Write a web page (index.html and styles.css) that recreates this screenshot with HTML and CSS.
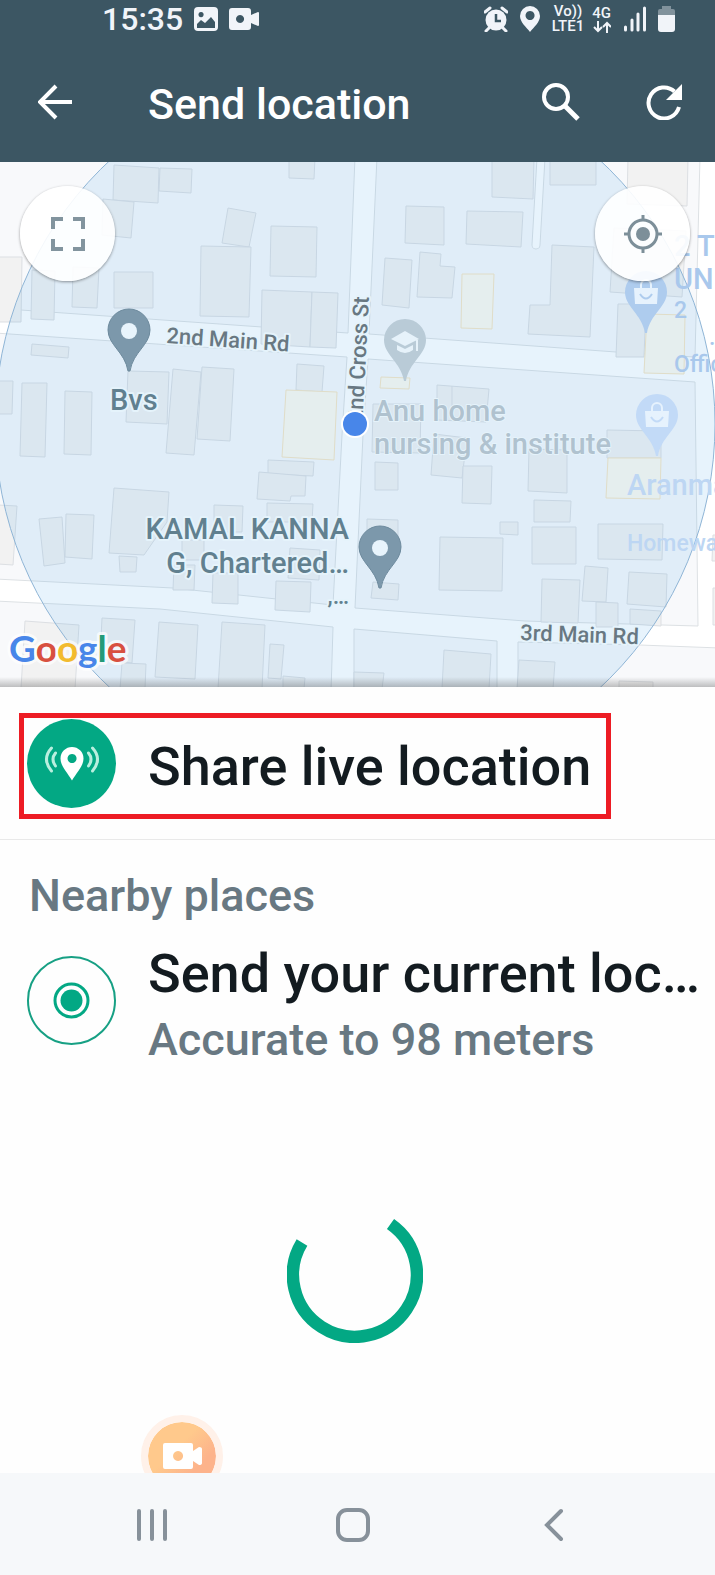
FILE: index.html
```
<!DOCTYPE html>
<html lang="en">
<head>
    <meta charset="UTF-8">
    <meta name="viewport" content="width=device-width, initial-scale=1.0">
    <title>Send location</title>
    <link rel="stylesheet" href="styles.css">
</head>
<body>

    <header>
        <div class="status-bar">
            <span class="clock">15:35</span>
            <svg class="status-image" width="24" height="24" viewBox="0 0 24 24">
                <path fill="#f1f4f9" fill-rule="evenodd" d="M4 0h16a4 4 0 0 1 4 4v16a4 4 0 0 1-4 4H4a4 4 0 0 1-4-4V4a4 4 0 0 1 4-4zM3 21h18v-6l-4-5-6 6-4-3-4 4zM7 5a2.600 2.600 0 1 0 .1 0z"/>
            </svg>
            <svg class="status-video" width="30" height="24" viewBox="0 0 30 24">
                <path fill="#f1f4f9" fill-rule="evenodd" d="M3 1h16a3 3 0 0 1 3 3v4l7-3q1 0 1 1v12q0 1-1 1l-7-3v4a3 3 0 0 1-3 3H3a3 3 0 0 1-3-3V4a3 3 0 0 1 3-3zM11 8a4 4 0 1 0 .1 0z"/>
            </svg>
            <div class="status-right">
                <svg width="24" height="26" viewBox="0 0 24 26">
                    <path d="M1 6l5-4M23 6l-5-4M5 22l-3 3M19 22l3 3" stroke="#f1f4f9" stroke-width="3" stroke-linecap="round"/>
                    <circle cx="12" cy="14" r="10.500" fill="#f1f4f9"/>
                    <path d="M12 8v7h5" fill="none" stroke="#3c5663" stroke-width="2.500"/>
                </svg>
                <svg width="20" height="26" viewBox="0 0 20 26">
                    <path fill="#f1f4f9" fill-rule="evenodd" d="M10 0a10 10 0 0 1 10 10c0 6-6 11-10 16C6 21 0 16 0 10A10 10 0 0 1 10 0zM10 5a4.500 4.500 0 1 0 .1 0z"/>
                </svg>
                <span class="tiny">Vo))<br>LTE1</span>
                <span class="tiny tiny-4g">4G
                    <svg width="18" height="12" viewBox="0 0 18 12">
                        <path d="M5 0v10M1 6l4 4 4-4M14 12V2M10 6l4-4 4 4" fill="none" stroke="#f1f4f9" stroke-width="2"/>
                    </svg>
                </span>
                <svg class="signal" width="22" height="26" viewBox="0 0 22 26">
                    <path d="M1.500 21v3M8 14v10M14 8v16M20.500 2v22" stroke="#f1f4f9" stroke-width="3" stroke-linecap="round"/>
                </svg>
                <svg class="battery" width="17" height="26" viewBox="0 0 17 26">
                    <path d="M4 0h9v3h2q2 0 2 2v5H0V5q0-2 2-2h2z" fill="#81929c"/>
                    <path d="M0 9h17v14q0 3-3 3H3q-3 0-3-3z" fill="#f1f4f9"/>
                </svg>
            </div>
        </div>
        <div class="toolbar">
            <button class="icon-btn back" aria-label="Back">
                <svg width="36" height="36" viewBox="0 0 36 36">
                    <path d="M34 18H3M18 2L2 18l16 16" fill="none" stroke="#fff" stroke-width="4"/>
                </svg>
            </button>
            <h1>Send location</h1>
            <button class="icon-btn search" aria-label="Search">
                <svg width="38" height="38" viewBox="0 0 38 38">
                    <circle cx="14" cy="14" r="12" fill="none" stroke="#fff" stroke-width="4"/>
                    <path d="M23 23l13 13" stroke="#fff" stroke-width="5"/>
                </svg>
            </button>
            <button class="icon-btn" aria-label="Refresh">
                <svg width="36" height="36" viewBox="0 0 36 36">
                    <path d="M33 23A15.500 15.500 0 1 1 28.500 7.500" fill="none" stroke="#fff" stroke-width="4"/>
                    <path d="M36 0v16H20z" fill="#fff"/>
                </svg>
            </button>
        </div>
    </header>

    <div class="map">
        <svg class="map-canvas" viewBox="0 0 715 525" preserveAspectRatio="xMidYMid slice">
            <defs>
                <path id="pin" d="M0-21A21 21 0 0 1 21 0C21 15 4 22 1 41H-1C-4 22-21 15-21 0A21 21 0 0 1 0-21z"/>
                <g id="bag">
                    <path d="M-12-4h24l-1 16h-22z" fill="#e6f2fd"/>
                    <path d="M-5-4v-3a5 5 0 0 1 10 0v3" fill="none" stroke="#e6f2fd" stroke-width="2"/>
                </g>
            </defs>

            <!-- blocks between the roads -->
            <g class="block">
                <path d="M-5-5H355L348 171 262 165 21 148-5 146z"/>
                <path d="M377-5H700L695 195 616 190 369 172z"/>
                <path d="M-5 171L347 195 342 273 333 443 173 426-5 417z"/>
                <path d="M368 197L695 220 698 464 662 463 525 459 355 446 363 273z"/>
                <path d="M-5 439L160 447 333 465 331 530H-5z"/>
                <path d="M354 467L497 479V530H354z"/>
                <path d="M518 480L640 483 720 486V530H518z"/>
            </g>
            <path class="lane-edge" d="M541-4L536 83"/>
            <path class="lane" d="M541-4L536 83"/>

            <g class="building">
                <path d="M114 3L159 6 158 41 113 38z"/>
                <path d="M160 6L192 7 191 31 159 29z"/>
                <path d="M103 37L134 40 131 76 102 73z"/>
                <path d="M289-4H315L314 17 289 16z"/>
                <path d="M228 46L256 51 249 85 222 81z"/>
                <path d="M201 84L251 85 249 155 200 154z"/>
                <path d="M271 64L317 65 316 115 270 114z"/>
                <path d="M262 128L312 130 310 185 261 182z"/>
                <path d="M312 130L338 131 336 186 310 185z"/>
                <path d="M32 108L55 109 54 158 31 157z"/>
                <path d="M73 105L99 106 97 146 72 145z"/>
                <path d="M114 110H153V146H114z"/>
                <path d="M-2 95H22L21 160H-2z"/>
                <path d="M32 182L69 185 68 196 31 193z"/>
                <path d="M-2 219H13L12 252H-2z"/>
                <path d="M22 221H47L45 295 20 294z"/>
                <path d="M65 229L92 230 91 293 64 292z"/>
                <path d="M128 209L169 210 167 262 126 260z"/>
                <path d="M173 207L201 210 194 293 166 291z"/>
                <path d="M202 205L234 207 230 279 197 277z"/>
                <path d="M297 202L324 204 322 230 296 228z"/>
                <path d="M268 298L314 300 313 314 268 312z"/>
                <path d="M259 310L306 314 305 334 291 334 290 339 257 337z"/>
                <path d="M267 341L313 342 312 360H267z"/>
                <path d="M214 343L243 344 242 370H214z"/>
                <path d="M182 378H204V398H182z"/>
                <path d="M114 326L169 330 167 360 153 380 144 393 109 391z"/>
                <path d="M119 394L137 395 136 410H120z"/>
                <path d="M39 357L62 355 65 401 44 404z"/>
                <path d="M66 352L94 353 92 397 65 395z"/>
                <path d="M-2 343L17 344 13 403-2 402z"/>
                <path d="M174 403H195L194 428H173z"/>
                <path d="M213 411H238V442L212 441z"/>
                <path d="M290 386L320 388 319 418 288 416z"/>
                <path d="M276 419L311 420 310 450 275 448z"/>
                <path d="M25 459L79 463 75 527H21z"/>
                <path d="M102 456L135 458 132 501 100 497z"/>
                <path d="M122 501L146 502 145 527H120z"/>
                <path d="M159 460L198 463 195 517 155 515z"/>
                <path d="M222 460L265 463 262 527H218z"/>
                <path d="M270 482L284 483 281 517 268 516z"/>
                <path d="M283 514L305 516 304 527H283z"/>
                <path d="M354 510L384 511 382 527H354z"/>
                <path d="M492-4H534L533 37 492 35z"/>
                <path d="M550-4H596V23H550z"/>
                <path d="M628-4H688L687 44 627 42z"/>
                <path d="M406 44L444 45V83L405 81z"/>
                <path d="M467 49L523 50 521 85 466 82z"/>
                <path d="M385 96L412 98 409 146 382 143z"/>
                <path d="M420 90L441 92 440 104 455 105 452 136 417 135z"/>
                <path d="M552 83L594 85 590 175 528 172 530 143H550z"/>
                <path d="M614 66L686 69 682 135 610 130z"/>
                <path d="M618 142H646L644 195H616z"/>
                <path d="M437 223L489 227 486 260 437 258z"/>
                <path d="M452 224V259"/>
                <path d="M373 242H421L420 291 372 290z"/>
                <path d="M375 300L398 301V328H375z"/>
                <path d="M434 272L467 276 462 316 431 313z"/>
                <path d="M463 304H492L491 342 462 341z"/>
                <path d="M529 287L567 288V331L528 329z"/>
                <path d="M607 268L661 269V296H607z"/>
                <path d="M534 338L571 339 570 360H534z"/>
                <path d="M500 360H518V373L500 372z"/>
                <path d="M532 365H576V402H532z"/>
                <path d="M598 362H663L662 398 598 397z"/>
                <path d="M440 375L503 376 502 429 439 428z"/>
                <path d="M367 357L398 358V376L367 373z"/>
                <path d="M373 420L399 422 398 438 371 436z"/>
                <path d="M542 417L580 418 578 461 541 460z"/>
                <path d="M585 404L608 406 606 440 582 439z"/>
                <path d="M629 410L667 412 666 445 627 442z"/>
                <path d="M596 440L618 441V465H596z"/>
                <path d="M630 447L661 449V464L630 462z"/>
                <path d="M444 488L491 492 489 527H442z"/>
                <path d="M519 498L555 500 553 527H517z"/>
                <path d="M619 519L653 520V527H619z"/>
                <path d="M713 373H720V399H712z"/>
                <path d="M713 426H720V463H713z"/>
            </g>
            <g class="building shop">
                <path d="M286 228L337 230 334 298 282 295z"/>
                <path d="M462 112H494L492 167 461 166z"/>
                <path d="M647 152L685 153 684 212 644 211z"/>
                <path d="M381 215L410 216 409 227 380 226z"/>
                <path d="M608 296H661L660 337 606 336z"/>
            </g>

            <circle class="accuracy" cx="355" cy="262" r="360"/>

            <g fill="#7c98ab" stroke="#6d8a9d">
                <use href="#pin" x="129" y="168"/>
                <use href="#pin" x="380" y="385"/>
            </g>
            <circle cx="129" cy="169" r="8" fill="#e8f4fc"/>
            <circle cx="380" cy="386" r="8" fill="#e8f4fc"/>
            <use href="#pin" x="405" y="178" fill="#b9cbd7"/>
            <path d="M391 177l14-8 14 8-14 7zM397 183l8 4 8-4v5q-8 6-16 0zM416 178h2v11h-2z" fill="#e6f2fa"/>
            <use href="#pin" x="646" y="130" fill="#aeccee"/>
            <use href="#bag" x="646" y="130"/>
            <path d="M640 132q6 9 12 0" fill="none" stroke="#aeccee" stroke-width="2"/>
            <use href="#pin" x="657" y="253" fill="#c2daf7"/>
            <use href="#bag" x="657" y="253"/>
            <path d="M651 255q6 9 12 0" fill="none" stroke="#c2daf7" stroke-width="2"/>

            <g class="road-name">
                <text transform="translate(166 181) rotate(4)">2nd Main Rd</text>
                <text transform="translate(520 478) rotate(2)">3rd Main Rd</text>
                <text transform="translate(369 135) rotate(-87)" text-anchor="end">2nd Cross St</text>
            </g>
            <g class="place">
                <text x="110" y="248">Bvs</text>
                <text x="349" y="377" text-anchor="end">KAMAL KANNA</text>
                <text x="349" y="411" text-anchor="end">G, Chartered…</text>
                <text x="349" y="442" text-anchor="end" class="small">,…</text>
            </g>
            <g class="place faded">
                <text x="374" y="259">Anu home</text>
                <text x="374" y="292">nursing &amp; institute</text>
            </g>
            <g class="place store">
                <text x="674" y="94">2 T</text>
                <text x="674" y="127">UN</text>
                <text x="674" y="156" class="small">2</text>
                <text x="709" y="183" class="small">.</text>
                <text x="674" y="210" class="small">Offic</text>
            </g>
            <g class="place store light">
                <text x="627" y="333">Aranma</text>
                <text x="627" y="389" class="small">Homewa</text>
            </g>

            <circle cx="355" cy="262" r="14" fill="#fff"/>
            <circle cx="355" cy="262" r="12" fill="#4886e9"/>

            <text class="google" x="9" y="500"><tspan fill="#4886e9">G</tspan><tspan fill="#d85040">o</tspan><tspan fill="#f2bb2e">o</tspan><tspan fill="#4886e9">g</tspan><tspan fill="#249a78">l</tspan><tspan fill="#d85040">e</tspan></text>
        </svg>

        <button class="map-btn fullscreen" aria-label="Full screen">
            <svg width="34" height="34" viewBox="0 0 34 34">
                <path d="M2 12V2h10M22 2h10v10M32 22v10H22M12 32H2V22" fill="none" stroke="#82949e" stroke-width="4"/>
            </svg>
        </button>
        <button class="map-btn locate" aria-label="My location">
            <svg width="38" height="38" viewBox="0 0 38 38">
                <circle cx="19" cy="19" r="14" fill="none" stroke="#7d8f99" stroke-width="3"/>
                <circle cx="19" cy="19" r="7" fill="#7d8f99"/>
                <path d="M19 0v6M19 32v6M0 19h6M32 19h6" stroke="#7d8f99" stroke-width="3"/>
            </svg>
        </button>
    </div>

    <main>
        <div class="share">
            <button class="share-btn">
                <svg width="89" height="89" viewBox="0 0 89 89">
                    <circle cx="44.500" cy="44.500" r="44.500" fill="#03a884"/>
                    <path fill="#fff" fill-rule="evenodd" d="M45 28a11.500 11.500 0 0 1 11.500 11.500c0 8-7 14-11.500 22-4.500-8-11.500-14-11.500-22A11.500 11.500 0 0 1 45 28zM45 35a4.500 4.500 0 1 0 .1 0z"/>
                    <path d="M24.500 29q-10 11 0 23M28.500 34q-5 6 0 13M65.500 29q10 11 0 23M61.500 34q5 6 0 13" fill="none" stroke="#b9efdf" stroke-width="3" stroke-linecap="round"/>
                </svg>
                <span>Share live location</span>
            </button>
        </div>

        <h2>Nearby places</h2>
        <button class="current">
            <svg width="89" height="89" viewBox="0 0 89 89">
                <circle cx="44.500" cy="44.500" r="43.500" fill="none" stroke="#17a084" stroke-width="2"/>
                <circle cx="44.500" cy="44.500" r="16.500" fill="none" stroke="#03a884" stroke-width="3"/>
                <circle cx="44.500" cy="44.500" r="11" fill="#03a884"/>
            </svg>
            <span class="current-text">
                <span class="current-title">Send your current loc…</span>
                <span class="current-sub">Accurate to 98 meters</span>
            </span>
        </button>

        <div class="loading">
            <svg width="136" height="136" viewBox="0 0 136 136" role="img" aria-label="Loading">
                <path d="M103.500 17A62 62 0 1 1 15 35.500" fill="none" stroke="#03a884" stroke-width="12.500"/>
            </svg>
        </div>

        <button class="recorder" aria-label="Screen recorder">
            <svg width="39" height="26" viewBox="0 0 39 26">
                <path fill="#fff" fill-rule="evenodd" d="M2 0h26q2 0 2 2v6l6-4q3 0 3 2v14q0 2-3 2l-6-4v6q0 2-2 2H2q-2 0-2-2V2q0-2 2-2zM15 8a5 5 0 1 0 .1 0z"/>
            </svg>
        </button>
    </main>

    <nav>
        <button aria-label="Recent apps">
            <svg width="32" height="36" viewBox="0 0 32 36">
                <path d="M3 4v28M16 4v28M29 4v28" stroke="#87919a" stroke-width="4" stroke-linecap="round"/>
            </svg>
        </button>
        <button aria-label="Home">
            <svg width="36" height="36" viewBox="0 0 36 36">
                <rect x="3" y="3" width="30" height="30" rx="9" fill="none" stroke="#87919a" stroke-width="4"/>
            </svg>
        </button>
        <button aria-label="Back">
            <svg width="20" height="36" viewBox="0 0 20 36">
                <path d="M17 4L3 18l14 14" fill="none" stroke="#87919a" stroke-width="4" stroke-linecap="round"/>
            </svg>
        </button>
    </nav>

</body>
</html>
```

FILE: styles.css
```
* {
    box-sizing: border-box;
}
body {
    font-family: Roboto, "Liberation Sans", sans-serif;
    font-weight: 500;
    background-color: #fefefe;
    margin: 0;
    min-height: 100vh;
    display: flex;
    flex-direction: column;
}
svg {
    display: block;
    flex-shrink: 0;
}
button {
    font: inherit;
    color: inherit;
    background: none;
    border: none;
    padding: 0;
    cursor: pointer;
}

/* header */
header {
    background-color: #3c5663;
    color: #fff;
    height: 162px;
}
.status-bar {
    display: flex;
    align-items: center;
    height: 38px;
    padding: 0 40px 0 102px;
    color: #f1f4f9;
}
.clock {
    font-size: 32px;
    line-height: 38px;
    margin-right: 11px;
}
.status-image {
    margin-right: 11px;
}
.status-right {
    display: flex;
    align-items: center;
    margin-left: auto;
}
.status-right svg {
    margin-right: 12px;
}
.tiny {
    font-size: 15px;
    line-height: 15px;
    text-align: center;
    margin-right: 8px;
}
.tiny-4g {
    margin-right: 13px;
}
.status-right .tiny-4g svg {
    margin: 0 auto;
}
.status-right .battery {
    margin-right: 0;
}
.toolbar {
    display: flex;
    align-items: center;
    height: 130px;
    padding: 0 33px 2px 38px;
}
h1 {
    flex: 1;
    margin: 0;
    padding-top: 4px;
    font-size: 43px;
    line-height: 48px;
    font-weight: 500;
}
.back {
    margin-right: 74px;
}
.search {
    margin-right: 66px;
}

/* map */
.map {
    position: relative;
    height: 525px;
    background-color: #fff;
    overflow: hidden;
}
.map::after {
    content: "";
    position: absolute;
    left: 0;
    right: 0;
    bottom: 0;
    height: 10px;
    background: linear-gradient(rgba(80, 80, 80, 0), rgba(80, 80, 80, 0.35));
}
.map-canvas {
    width: 100%;
    height: 100%;
}
.block {
    fill: #f8f9fb;
    stroke: #dde1e4;
}
.building {
    fill: #f2f2f2;
    stroke: #dcdfe3;
}
.shop {
    fill: #fdfaf0;
    stroke: #f7e6c4;
}
.lane {
    stroke: #fff;
    stroke-width: 7;
    stroke-linecap: round;
}
.lane-edge {
    stroke: #dde1e4;
    stroke-width: 9;
    stroke-linecap: round;
}
.accuracy {
    fill: rgba(56, 160, 230, 0.12);
    stroke: #8fb5d6;
}
.road-name,
.place {
    paint-order: stroke;
    stroke: #e5f3fb;
    stroke-width: 4px;
    stroke-linejoin: round;
}
.road-name {
    font-size: 22px;
    fill: #687882;
}
.place {
    font-size: 29px;
    fill: #61808f;
}
.place .small {
    font-size: 23px;
}
.faded {
    fill: #b0c2cf;
    stroke-width: 2px;
}
.store {
    fill: #a9c8ec;
    stroke-width: 0;
}
.light {
    fill: #bdd6f3;
}
.google {
    font-family: Lato, sans-serif;
    font-size: 37px;
    font-weight: 700;
    paint-order: stroke;
    stroke: rgba(255, 255, 255, 0.7);
    stroke-width: 6px;
    stroke-linejoin: round;
}
.map-btn {
    position: absolute;
    top: 24px;
    display: flex;
    align-items: center;
    justify-content: center;
    width: 95px;
    height: 95px;
    border-radius: 50%;
    background-color: rgba(255, 255, 255, 0.9);
    box-shadow: 0 1px 3px rgba(0, 0, 0, 0.4);
}
.fullscreen {
    left: 20px;
}
.locate {
    right: 25px;
}

/* list */
main {
    position: relative;
    flex: 1;
    display: flex;
    flex-direction: column;
    overflow: hidden;
}
.share {
    padding: 26px 19px 20px;
    border-bottom: 1px solid #e9e9e9;
}
.share-btn {
    display: flex;
    align-items: flex-start;
    gap: 32px;
    height: 106px;
    padding: 1px 15px 0 3px;
    border: 5px solid #ed1c24;
    color: #131b20;
    font-size: 54px;
    line-height: 96px;
    white-space: nowrap;
}
h2 {
    margin: 28px 29px 0;
    color: #687882;
    font-size: 45px;
    line-height: 56px;
    font-weight: 500;
}
.current {
    display: flex;
    align-items: flex-start;
    gap: 32px;
    padding: 32px 16px 0 27px;
    text-align: left;
    white-space: nowrap;
}
.current-text {
    margin-top: -16px;
}
.current-title,
.current-sub {
    display: block;
}
.current-title {
    color: #131b20;
    font-size: 54px;
    line-height: 68px;
}
.current-sub {
    color: #687882;
    font-size: 45px;
    line-height: 64px;
}
.loading {
    flex: 1;
    display: flex;
    align-items: center;
    justify-content: center;
    padding: 4px 6px 0 0;
}
.recorder {
    position: absolute;
    left: 141px;
    bottom: -24px;
    display: flex;
    align-items: center;
    justify-content: center;
    width: 82px;
    height: 82px;
    border: 7px solid #fff1e9;
    border-radius: 50%;
    background: linear-gradient(135deg, #ffc98c 40%, #fdb38b 70%) padding-box;
}

/* system navigation */
nav {
    display: flex;
    height: 102px;
    padding: 2px 60px 0 51px;
    background-color: #f6f8fa;
}
nav button {
    flex: 1;
    display: flex;
    align-items: center;
    justify-content: center;
}
```
